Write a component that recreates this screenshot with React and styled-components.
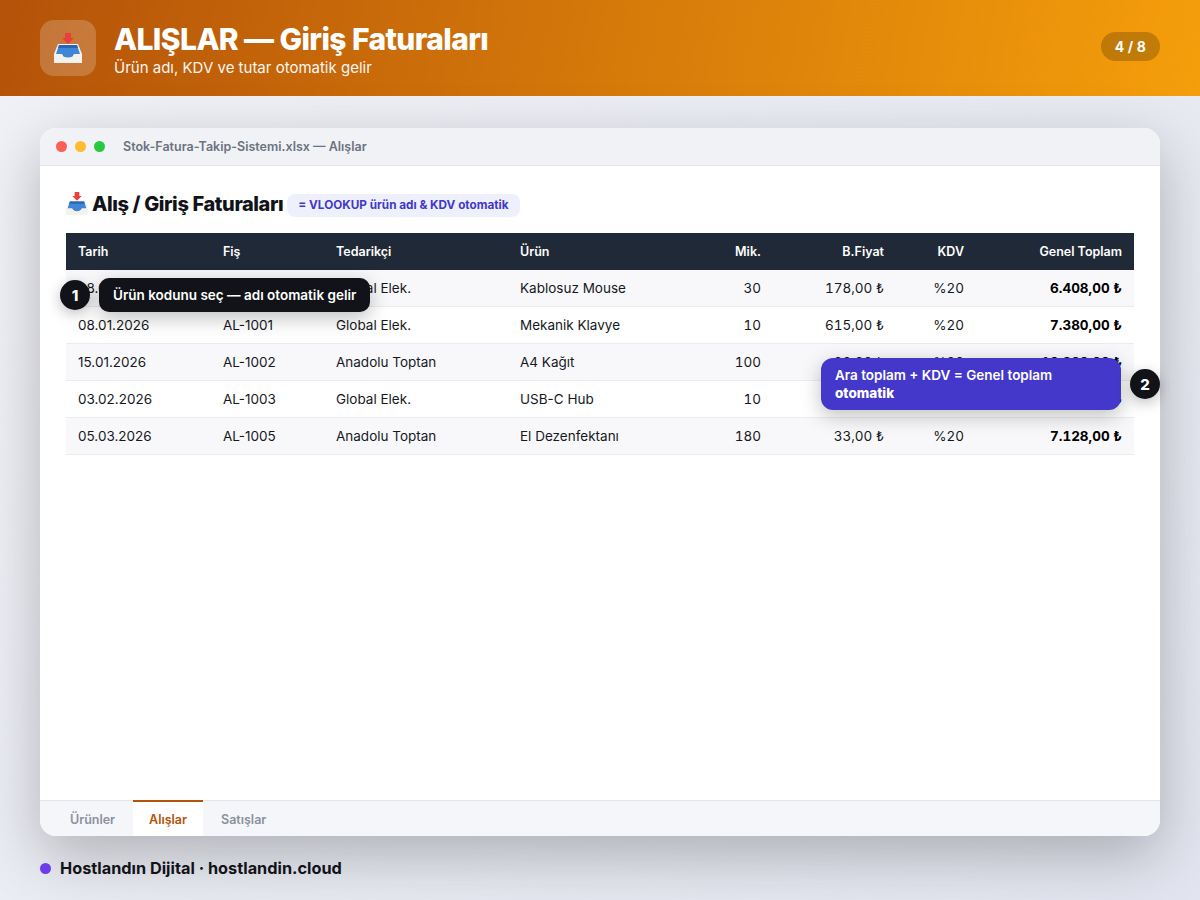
import styled, { createGlobalStyle } from 'styled-components';

const GlobalStyle = createGlobalStyle`
  html, body {
    margin: 0;
    height: 100%;
  }
  body {
    font-family: Inter, "Noto Sans", "Liberation Sans", sans-serif;
    color: #111318;
  }
  * {
    box-sizing: border-box;
  }
`;

const rows = [
  { date: '08.01.2026', slip: 'AL-1000', vendor: 'Global Elek.', item: 'Kablosuz Mouse', qty: '30', price: '178,00 ₺', vat: '%20', total: '6.408,00 ₺' },
  { date: '08.01.2026', slip: 'AL-1001', vendor: 'Global Elek.', item: 'Mekanik Klavye', qty: '10', price: '615,00 ₺', vat: '%20', total: '7.380,00 ₺' },
  { date: '15.01.2026', slip: 'AL-1002', vendor: 'Anadolu Toptan', item: 'A4 Kağıt', qty: '100', price: '90,00 ₺', vat: '%20', total: '10.800,00 ₺' },
  { date: '03.02.2026', slip: 'AL-1003', vendor: 'Global Elek.', item: 'USB-C Hub', qty: '10', price: '320,00 ₺', vat: '%20', total: '3.840,00 ₺' },
  { date: '05.03.2026', slip: 'AL-1005', vendor: 'Anadolu Toptan', item: 'El Dezenfektanı', qty: '180', price: '33,00 ₺', vat: '%20', total: '7.128,00 ₺' },
];

// inbox tray emoji, white tray with blue inside and red arrow
function InboxIcon({ size }) {
  return (
    <svg width={size} height={size * 30 / 28} viewBox="0 0 28 30" aria-hidden="true">
      <path d="M11 0h6v5h3l-6 6-6-6h3z" fill="#e8403a" />
      <path d="M4 11h20l4 10v2H0v-2z" fill="#f4f2ee" />
      <path d="M5 12h18l3 9h-6q-1.500 4-6 4t-6-4H2z" fill="#3f86d6" />
      <path d="M5 12h18l1 3H4z" fill="#2a66b5" />
      <path d="M0 21h7.500q1.500 3.500 6.500 3.500t6.500-3.500H28v9H0z" fill="#f4f2ee" />
    </svg>
  );
}

export default function App() {
  return (
    <Page>
      <GlobalStyle />
      <Banner>
        <IconTile>
          <InboxIcon size={28} />
        </IconTile>
        <BannerText>
          <BannerTitle>ALIŞLAR — Giriş Faturaları</BannerTitle>
          <BannerSub>Ürün adı, KDV ve tutar otomatik gelir</BannerSub>
        </BannerText>
        <StepPill>4 / 8</StepPill>
      </Banner>

      <Main>
        <Window>
          <TitleBar>
            <Dot $color="#ff5f57" />
            <Dot $color="#febc2e" />
            <Dot $color="#28c840" />
            <FileName>Stok-Fatura-Takip-Sistemi.xlsx — Alışlar</FileName>
          </TitleBar>

          <Sheet>
            <SheetHeading>
              <SheetTitle>
                <InboxIcon size={22} />
                Alış / Giriş Faturaları
              </SheetTitle>
              <FormulaChip>= VLOOKUP ürün adı &amp; KDV otomatik</FormulaChip>
            </SheetHeading>

            <Table>
              <colgroup>
                <col style={{ width: 145 }} />
                <col style={{ width: 113 }} />
                <col style={{ width: 184 }} />
                <col />
                <col style={{ width: 80 }} />
                <col style={{ width: 123 }} />
                <col style={{ width: 80 }} />
                <col style={{ width: 158 }} />
              </colgroup>
              <thead>
                <tr>
                  <Th>Tarih</Th>
                  <Th>Fiş</Th>
                  <Th>Tedarikçi</Th>
                  <Th>Ürün</Th>
                  <Th $right>Mik.</Th>
                  <Th $right>B.Fiyat</Th>
                  <Th $right>KDV</Th>
                  <Th $right>Genel Toplam</Th>
                </tr>
              </thead>
              <tbody>
                {rows.map((row) => (
                  <Row key={row.slip}>
                    <Td>{row.date}</Td>
                    <Td>{row.slip}</Td>
                    <Td>{row.vendor}</Td>
                    <Td>{row.item}</Td>
                    <Td $right>{row.qty}</Td>
                    <Td $right>{row.price}</Td>
                    <Td $right>{row.vat}</Td>
                    <Td $right $bold>{row.total}</Td>
                  </Row>
                ))}
              </tbody>
            </Table>

            <CalloutLeft>
              <Badge>1</Badge>
              <DarkBubble>Ürün kodunu seç — adı otomatik gelir</DarkBubble>
            </CalloutLeft>

            <CalloutRight>
              <BlueBubble>
                Ara toplam + KDV = Genel toplam <strong>otomatik</strong>
              </BlueBubble>
              <Badge>2</Badge>
            </CalloutRight>
          </Sheet>

          <TabBar>
            <Tab>Ürünler</Tab>
            <Tab $active>Alışlar</Tab>
            <Tab>Satışlar</Tab>
          </TabBar>
        </Window>
      </Main>

      <Footer>
        <FooterDot />
        Hostlandın Dijital · hostlandin.cloud
      </Footer>
    </Page>
  );
}

const Page = styled.div`
  width: 1200px;
  height: 900px;
  display: flex;
  flex-direction: column;
  overflow: hidden;
  background: linear-gradient(135deg, #f1f2f7 0%, #e2e5ef 100%);
`;

const Banner = styled.header`
  height: 96px;
  flex: none;
  display: flex;
  align-items: center;
  gap: 18px;
  padding: 0 40px;
  background: linear-gradient(100deg, #b45309 0%, #f59e0b 100%);
  color: #fff;
`;

const IconTile = styled.div`
  width: 56px;
  height: 56px;
  border-radius: 14px;
  background: rgba(255, 255, 255, 0.2);
  display: flex;
  align-items: center;
  justify-content: center;
`;

const BannerText = styled.div`
  flex: 1;
  display: flex;
  flex-direction: column;
  gap: 2px;
`;

const BannerTitle = styled.h1`
  margin: 0;
  font-size: 30px;
  line-height: 36px;
  font-weight: 800;
  letter-spacing: -0.6px;
`;

const BannerSub = styled.div`
  font-size: 15px;
  line-height: 17px;
  font-weight: 400;
  opacity: 0.95;
`;

const StepPill = styled.div`
  margin-top: -3px;
  padding: 0 14px;
  height: 29px;
  line-height: 29px;
  border-radius: 15px;
  background: rgba(0, 0, 0, 0.2);
  font-size: 14px;
  font-weight: 700;
  letter-spacing: 0.1px;
`;

const Main = styled.main`
  flex: none;
  height: 740px;
  padding: 32px 40px 0;
`;

const Window = styled.section`
  height: 708px;
  display: flex;
  flex-direction: column;
  background: #fff;
  border-radius: 16px;
  box-shadow: 0 20px 60px rgba(0, 0, 0, 0.25);
`;

const TitleBar = styled.div`
  height: 38px;
  flex: none;
  display: flex;
  align-items: center;
  gap: 8px;
  padding: 0 16px;
  background: #f1f2f5;
  border-bottom: 1px solid #e2e4ea;
  border-radius: 16px 16px 0 0;
`;

const Dot = styled.span`
  width: 11px;
  height: 11px;
  border-radius: 50%;
  background: ${(props) => props.$color};
`;

const FileName = styled.span`
  margin-left: 10px;
  font-size: 12.5px;
  font-weight: 600;
  color: #6b7280;
`;

const Sheet = styled.div`
  flex: 1;
  position: relative;
  padding: 24px 26px;
`;

const SheetHeading = styled.div`
  display: flex;
  align-items: center;
  gap: 4px;
  height: 27px;
  margin-bottom: 16px;
`;

const SheetTitle = styled.h2`
  margin: 0;
  display: flex;
  align-items: center;
  gap: 4px;
  font-size: 20px;
  font-weight: 800;
  letter-spacing: -0.4px;
  color: #111318;
`;

const FormulaChip = styled.span`
  margin-top: 4px;
  padding: 0 11px;
  height: 23px;
  line-height: 23px;
  border-radius: 8px;
  background: #eef0fd;
  color: #4338ca;
  font-size: 11.75px;
  font-weight: 700;
`;

const Table = styled.table`
  width: 100%;
  table-layout: fixed;
  border-collapse: separate;
  border-spacing: 0;
`;

const Th = styled.th`
  height: 37px;
  padding: 0 12px;
  background: #1f2937;
  color: #fff;
  font-size: 12.5px;
  font-weight: 600;
  text-align: ${(props) => (props.$right ? 'right' : 'left')};
`;

const Row = styled.tr`
  &:nth-child(odd) {
    background: #f8f8fb;
  }
`;

const Td = styled.td`
  height: 37px;
  padding: 0 12px;
  border-bottom: 1px solid #ebecf0;
  font-size: 13.5px;
  font-variant-numeric: ${(props) => (props.$right ? 'tabular-nums' : 'normal')};
  color: ${(props) => (props.$bold ? '#000' : '#16181d')};
  font-weight: ${(props) => (props.$bold ? 700 : 400)};
  text-align: ${(props) => (props.$right ? 'right' : 'left')};
`;

const Callout = styled.div`
  position: absolute;
  display: flex;
  align-items: center;
  gap: 9px;
`;

const CalloutLeft = styled(Callout)`
  left: 20px;
  top: 112px;
`;

const CalloutRight = styled(Callout)`
  right: 0;
  top: 192px;
`;

const Badge = styled.span`
  width: 30px;
  height: 30px;
  flex: none;
  display: flex;
  align-items: center;
  justify-content: center;
  border-radius: 50%;
  background: #111318;
  color: #fff;
  font-size: 15px;
  font-weight: 800;
  box-shadow: 0 4px 14px rgba(0, 0, 0, 0.25);
`;

const DarkBubble = styled.div`
  height: 34px;
  line-height: 34px;
  padding: 0 14px;
  border-radius: 10px;
  background: #111318;
  color: #fff;
  font-size: 13.5px;
  font-weight: 600;
  white-space: nowrap;
  box-shadow: 0 6px 20px rgba(0, 0, 0, 0.25);
`;

const BlueBubble = styled.div`
  width: 300px;
  padding: 8px 14px;
  border-radius: 12px;
  background: #4338ca;
  color: #fff;
  font-size: 13.5px;
  line-height: 18px;
  font-weight: 600;
  box-shadow: 0 6px 20px rgba(0, 0, 0, 0.25);
  strong {
    font-weight: 800;
  }
`;

const TabBar = styled.nav`
  height: 36px;
  flex: none;
  display: flex;
  gap: 2px;
  padding-left: 14px;
  background: #f5f6f9;
  border-top: 1px solid #e2e4ea;
  border-radius: 0 0 16px 16px;
`;

const Tab = styled.div`
  display: flex;
  align-items: center;
  padding: 0 16px;
  margin-top: -1px;
  font-size: 12.5px;
  font-weight: 600;
  color: ${(props) => (props.$active ? '#b45309' : '#8b90a0')};
  background: ${(props) => (props.$active ? '#fff' : 'transparent')};
  border-top: 2px solid ${(props) => (props.$active ? '#b45309' : 'transparent')};
`;

const Footer = styled.footer`
  flex: 1;
  display: flex;
  align-items: center;
  gap: 9px;
  padding: 0 40px;
  font-size: 16.3px;
  font-weight: 700;
  color: #111318;
`;

const FooterDot = styled.span`
  width: 11px;
  height: 11px;
  border-radius: 50%;
  background: #6a3de8;
`;
